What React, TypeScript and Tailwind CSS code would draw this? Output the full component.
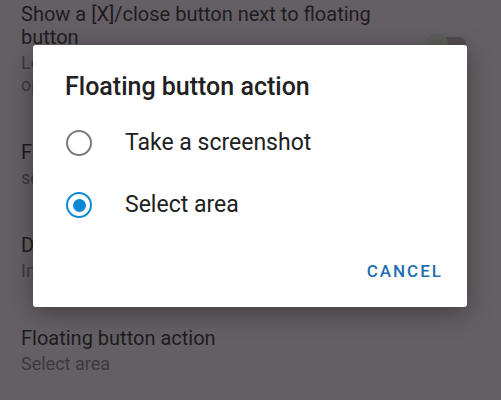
import React from "react";

const Radio = ({ checked }: { checked: boolean }) => (
  <span
    className={
      "flex h-[26px] w-[26px] items-center justify-center rounded-full border-[2.5px] " +
      (checked ? "border-[#0a8ad6]" : "border-[#7a7a7a]")
    }
  >
    {checked && <span className="h-[13px] w-[13px] rounded-full bg-[#0a8ad6]" />}
  </span>
);

const Pref = ({ title, summary }: { title: string; summary: string }) => (
  <div className="w-[400px] px-[21px]">
    <div className="text-[20px] leading-[23px] text-[#1e1c1f]">{title}</div>
    <div className="mt-[3px] whitespace-pre-line text-[18px] leading-[22px] text-[#3d393e]">{summary}</div>
  </div>
);

export default function App() {
  const options = ["Take a screenshot", "Select area"];
  const selected = 1;

  return (
    <div
      className="relative h-[400px] w-[501px] overflow-hidden bg-[#645f64]"
      style={{ fontFamily: "Roboto, 'Noto Sans', sans-serif" }}
    >
      <div className="flex flex-col gap-[45px] pt-[3px]">
        <Pref
          title="Show a [X]/close button next to floating button"
          summary={"Long press the floating button to show\noptions"}
        />
        <Pref title="Floating button size" summary="screenshot" />
        <Pref title="Delay" summary="Immediately" />
        <Pref title="Floating button action" summary="Select area" />
      </div>

      {/* switch peeking out from behind the dialog */}
      <div className="absolute left-[432px] top-[37px] h-[14px] w-[34px] rounded-full bg-[#4f4b4f]" />
      <div className="absolute left-[426px] top-[33px] h-[22px] w-[22px] rounded-full bg-[#5c5d5a]" />

      <div className="absolute left-[33px] top-[45px] w-[434px] rounded-[3px] bg-white shadow-[0_6px_24px_rgba(0,0,0,0.35)]">
        <div className="px-[32px] pt-[27px] text-[25px] font-medium leading-[30px] text-[#212121]">
          Floating button action
        </div>
        <div className="mt-[10px] flex flex-col">
          {options.map((o, i) => (
            <div key={o} className="flex h-[62px] items-center pl-[33px]">
              <Radio checked={i === selected} />
              <span className="ml-[33px] text-[23px] text-[#212121]">{o}</span>
            </div>
          ))}
        </div>
        <div className="flex justify-end px-[24px] pb-[22px] pt-[23px]">
          <span className="text-[17px] font-medium tracking-[2px] text-[#1f6db3]">CANCEL</span>
        </div>
      </div>
    </div>
  );
}
